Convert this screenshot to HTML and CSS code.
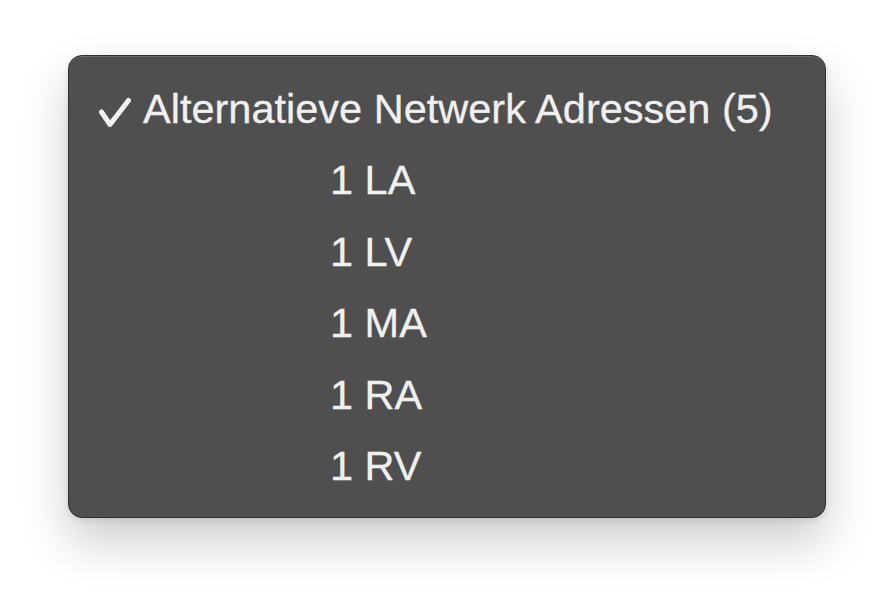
FILE: index.html
```html
<!DOCTYPE html>
<html lang="nl">
<head>
<meta charset="utf-8">
<title>Menu</title>
<link rel="stylesheet" href="styles.css">
</head>
<body>
<div class="menu">
  <div class="row header">
    <svg class="check" width="32" height="30" viewBox="0 0 32 30"><path d="M2.5 15 L11 27.5 L29.5 3.5" fill="none" stroke="#f2f2f2" stroke-width="5" stroke-linecap="round" stroke-linejoin="round"/></svg><span>Alternatieve Netwerk Adressen (5)</span>
  </div>
  <div class="row item">1 LA</div>
  <div class="row item">1 LV</div>
  <div class="row item">1 MA</div>
  <div class="row item">1 RA</div>
  <div class="row item">1 RV</div>
</div>
</body>
</html>
```
FILE: styles.css
```css
html {
  background: #ffffff;
}
body {
  margin: 0;
  box-sizing: border-box;
  min-height: 598px;
  padding: 55px 0 0 68px;
  font-family: "Liberation Sans", Arial, sans-serif;
}
.menu {
  box-sizing: border-box;
  width: 758px;
  height: 463px;
  background: #4f4f4f;
  border: 1px solid #2f2f2f;
  border-radius: 14px;
  box-shadow: inset 0 1px 0 rgba(255,255,255,0.16), 0 24px 48px rgba(0,0,0,0.2), 0 2px 6px rgba(0,0,0,0.1);
  padding: 17px 0 0 30px;
  color: #f0f0f0;
  font-size: 41.5px;
  -webkit-text-stroke: 0.3px #f0f0f0;
}
.row {
  height: 71.4px;
  line-height: 71.4px;
  white-space: nowrap;
}
.check {
  vertical-align: -4px;
  margin-right: 12px;
}
.item {
  padding-left: 231px;
}
```
